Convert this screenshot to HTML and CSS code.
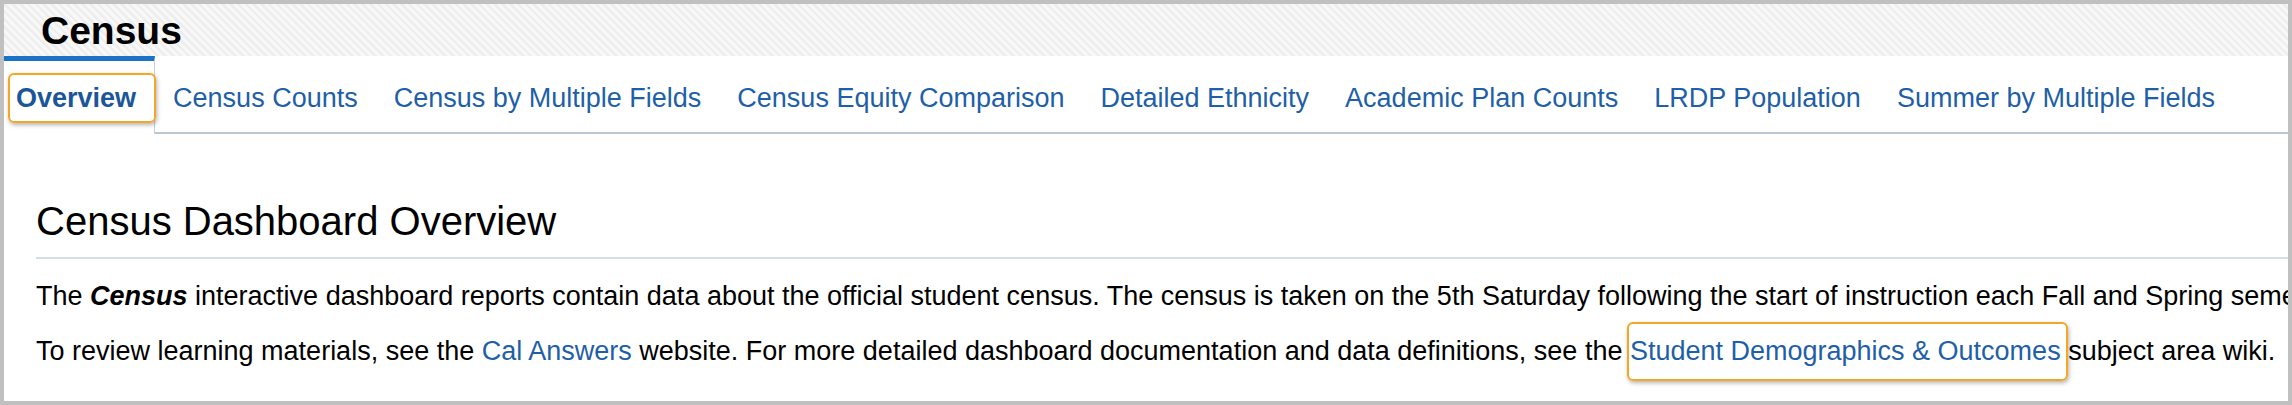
FILE: index.html
```html
<!DOCTYPE html>
<html lang="en">
<head>
<meta charset="utf-8">
<title>Census</title>
<link rel="stylesheet" href="styles.css">
</head>
<body>
<div class="frame">
  <header class="titlebar">
    <h1 class="title">Census</h1>
  </header>
  <nav class="tabs">
    <a class="tab tab-active" href="#"><span class="focus focus-tab">Overview</span></a>
    <a class="tab" href="#">Census Counts</a>
    <a class="tab" href="#">Census by Multiple Fields</a>
    <a class="tab" href="#">Census Equity Comparison</a>
    <a class="tab" href="#">Detailed Ethnicity</a>
    <a class="tab" href="#">Academic Plan Counts</a>
    <a class="tab" href="#">LRDP Population</a>
    <a class="tab" href="#">Summer by Multiple Fields</a>
  </nav>
  <main class="content">
    <h2 class="heading">Census Dashboard Overview</h2>
    <p class="intro">The <strong><em>Census</em></strong> interactive dashboard reports contain data about the official student census. The census is taken on the 5th Saturday following the start of instruction each Fall and Spring semester.</p>
    <p class="intro">To review learning materials, see the <a class="link" href="#">Cal Answers</a> website. For more detailed dashboard documentation and data definitions, see the <a class="link focus focus-link" href="#">Student Demographics &amp; Outcomes </a>subject area wiki.</p>
  </main>
</div>
</body>
</html>
```
FILE: styles.css
```css
html, body {
  margin: 0;
  padding: 0;
  background: #ffffff;
}

body {
  font-family: "Liberation Sans", Arial, sans-serif;
  color: #000000;
}

.frame {
  width: 2292px;
  height: 405px;
  box-sizing: border-box;
  border: 4px solid #c0c0c0;
  overflow: hidden;
  background: #ffffff;
}

.titlebar {
  height: 52px;
  box-sizing: border-box;
  padding: 2px 0 0 37px;
  background: repeating-linear-gradient(45deg, #f8f8f8 0 3px, #eeeeee 3px 5.5px);
}

.title {
  margin: 0;
  font-size: 39px;
  font-weight: bold;
  line-height: 50px;
  color: #000000;
}

.tabs {
  display: flex;
  align-items: flex-start;
  height: 78px;
  box-sizing: border-box;
  border-bottom: 2px solid #bcc8d1;
}

.tab {
  display: block;
  height: 76px;
  box-sizing: border-box;
  border-top: 5px solid transparent;
  padding: 21px 18px 0;
  font-size: 27px;
  line-height: 32px;
  color: #1e5fa8;
  text-decoration: none;
  white-space: nowrap;
}

.tab-active {
  position: relative;
  z-index: 1;
  height: 78px;
  margin-bottom: -2px;
  padding-left: 12px;
  padding-right: 18px;
  border-top-color: #1a73c8;
  border-right: 1px solid #c6d1db;
  background: #ffffff;
  font-weight: bold;
  color: #1b5699;
}

.focus {
  position: relative;
}

.focus::after {
  content: "";
  position: absolute;
  border: 2px solid #f5a623;
  border-radius: 6px;
  box-shadow: 1px 2px 4px rgba(0, 0, 0, 0.3);
  pointer-events: none;
}

.focus-tab::after {
  left: -8px;
  right: -20px;
  top: -10px;
  bottom: -10px;
}

.focus-link::after {
  left: -3px;
  right: 0;
  top: -14px;
  bottom: -15px;
}

.content {
  padding-left: 32px;
}

.heading {
  margin: 64px 0 0;
  padding-bottom: 13px;
  border-bottom: 2px solid #d4dee7;
  font-size: 40px;
  font-weight: normal;
  line-height: 46px;
  color: #000000;
}

.intro {
  margin: 0;
  font-size: 27px;
  line-height: 55px;
  white-space: nowrap;
}

.heading + .intro {
  margin-top: 10px;
}

.link {
  color: #1e5fa8;
  text-decoration: none;
}
```
